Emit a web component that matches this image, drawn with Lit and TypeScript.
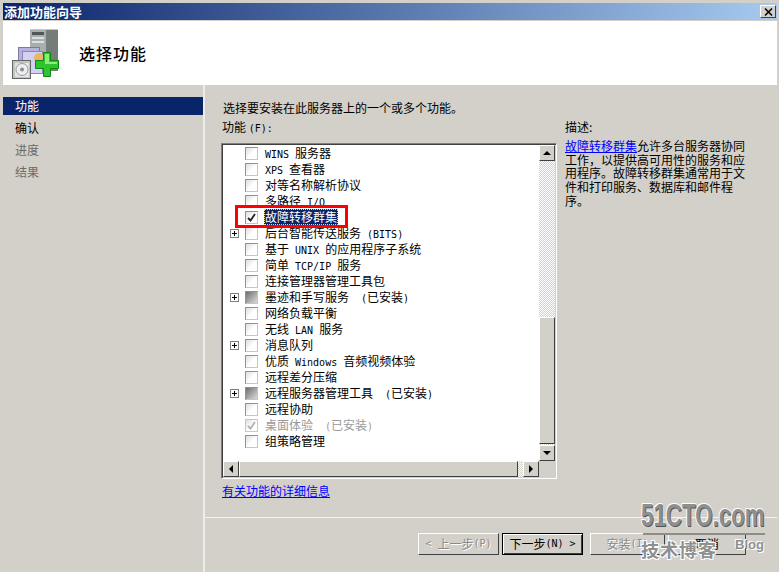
import { LitElement, html, css, svg } from "lit";
import { customElement } from "lit/decorators.js";

type Item = { t: string; exp?: boolean; st?: "checked" | "mixed" | "dis"; sel?: boolean };

const ITEMS: Item[] = [
  { t: "WINS 服务器" },
  { t: "XPS 查看器" },
  { t: "对等名称解析协议" },
  { t: "多路径 I/O" },
  { t: "故障转移群集", st: "checked", sel: true },
  { t: "后台智能传送服务 (BITS)", exp: true },
  { t: "基于 UNIX 的应用程序子系统" },
  { t: "简单 TCP/IP 服务" },
  { t: "连接管理器管理工具包" },
  { t: "墨迹和手写服务  (已安装)", exp: true, st: "mixed" },
  { t: "网络负载平衡" },
  { t: "无线 LAN 服务" },
  { t: "消息队列", exp: true },
  { t: "优质 Windows 音频视频体验" },
  { t: "远程差分压缩" },
  { t: "远程服务器管理工具  (已安装)", exp: true, st: "mixed" },
  { t: "远程协助" },
  { t: "桌面体验  (已安装)", st: "dis" },
  { t: "组策略管理" },
];

function txt(s: string) {
  return s.split(/([\x20-\x7e]+)/).map((p, i) => (i % 2 ? html`<span class="lat">${p}</span>` : p));
}

const arrow = (pts: string) =>
  html`<svg width="8" height="8" viewBox="0 0 8 8"><polygon points=${pts} fill="#000"></polygon></svg>`;

const icon = svg`
  <rect x="18" y="1" width="28" height="42" fill="#7f8784"/>
  <rect x="18" y="1" width="16" height="42" fill="#a8adaf"/>
  <rect x="34" y="1" width="12" height="42" fill="#757d79"/>
  <rect x="18" y="1" width="28" height="1" fill="#c6c9c9"/>
  <rect x="20" y="4" width="12" height="3" fill="#50555a"/>
  <rect x="20" y="9" width="12" height="2" fill="#dcdfdf"/>
  <rect x="20" y="13" width="12" height="2" fill="#dcdfdf"/>
  <rect x="6.500" y="19.500" width="21" height="24" fill="#b4b1dc" stroke="#7c78a8"/>
  <rect x="10.500" y="23.500" width="20" height="22" fill="#d3d1f2" stroke="#8a86b5"/>
  <circle cx="27" cy="30" r="5" fill="#e8b765"/>
  <rect x="0.500" y="32.500" width="18" height="18" fill="#c2c3c2" stroke="#666"/>
  <rect x="3" y="35" width="14" height="14" fill="#e4e5e6"/>
  <circle cx="10" cy="41.500" r="6" fill="#eceeef" stroke="#9a9a9a"/>
  <circle cx="10" cy="41.500" r="2" fill="#8b8b8b"/>
  <path d="M31.500 24.500h7v8h8v8h-8v8h-7v-8h-8v-8h8z" fill="#2fc42f" stroke="#0c8a10"/>
  <path d="M33 26h4v8h8v2h-12z" fill="#8cec7a"/>
`;

@customElement("app-root")
export class AppRoot extends LitElement {
  static styles = css`
    :host {
      display: block;
      position: relative;
      width: 779px;
      height: 572px;
      overflow: hidden;
      background: #d3d0ca;
      font: 12px/14px "Noto Sans CJK SC", sans-serif;
      color: #000;
    }
    .lat { font-family: "DejaVu Sans Mono", monospace; font-size: 10px; white-space: pre; }
    .frame { height: 100%; box-sizing: border-box; padding: 3px 2px 0 3px; display: flex; flex-direction: column; }
    .title {
      height: 17px; flex: none; display: flex; align-items: center; justify-content: space-between;
      padding: 0 1px; background: linear-gradient(90deg, #0a246a, #a6caf0);
      color: #fff; font-size: 13px; font-weight: 700; margin-bottom: 1px;
    }
    .close {
      width: 16px; height: 13px; box-sizing: border-box; background: #d3d0ca; display: flex;
      align-items: center; justify-content: center; border: 1px solid; border-color: #fff #404040 #404040 #fff;
    }
    .head { height: 64px; flex: none; background: #fff; display: flex; align-items: flex-start; }
    .head svg { margin: 7px 0 0 9px; flex: none; }
    .head h1 { margin: 22px 0 0 15px; font-size: 16px; line-height: 20px; font-weight: 500; letter-spacing: 1px; }
    .body { flex: 1; display: flex; min-height: 0; }
    .nav { width: 200px; flex: none; padding-top: 12px; box-sizing: border-box; }
    .nav div { height: 22px; display: flex; }
    .nav span { flex: 1; height: 18px; line-height: 18px; padding-left: 12px; }
    .nav .on span { background: #0a246a; color: #fff; }
    .nav .off { color: #6b6b6b; }
    .sep { width: 2px; flex: none; background: #eeece8; }
    .right { flex: 1; display: flex; flex-direction: column; min-width: 0; }
    .main { height: 432px; flex: none; box-sizing: border-box; padding: 16px 0 0 16px; display: flex; gap: 8px; }
    .col { width: 336px; flex: none; }
    .intro { margin: 0 0 5px 2px; }
    .lbl { margin: 0 0 9px 1px; height: 14px; }
    .list {
      width: 336px; height: 336px; box-sizing: border-box; border: 1px solid; border-color: #808080 #fff #fff #808080;
      box-shadow: inset 1px 1px #404040, inset -1px -1px #d3d0ca; padding: 1px;
      display: grid; grid-template-columns: 1fr 16px; grid-template-rows: 1fr 16px; position: relative;
    }
    .rows { background: #fff; overflow: hidden; }
    .row { height: 16px; display: flex; align-items: center; padding-left: 7px; white-space: pre; }
    .row.dis { color: #9a9a9a; }
    .exp {
      width: 9px; height: 9px; box-sizing: border-box; border: 1px solid #808080; flex: none; margin-right: 6px;
      background: linear-gradient(#000, #000) center / 5px 1px no-repeat, linear-gradient(#000, #000) center / 1px 5px no-repeat, #fff;
    }
    .exp.none { border: 0; background: none; }
    .cb {
      width: 13px; height: 13px; box-sizing: border-box; flex: none; margin-right: 6px; border: 1px solid;
      border-color: #909090 #c4c4c4 #c4c4c4 #909090; background: linear-gradient(135deg, #dfdfdf, #fff 55%);
      display: flex; align-items: center; justify-content: center;
    }
    .cb.mixed { background: linear-gradient(135deg, #6e6e6e, #dcdcdc); }
    .cb.dis { border-color: #c8c8c8; }
    .t { padding: 0 1px; height: 16px; line-height: 16px; box-sizing: border-box; }
    .t.sel { background: #0a246a; color: #fff; outline: 1px dotted #e8d890; outline-offset: -1px; }
    .red { position: absolute; left: 13px; top: 61px; width: 113px; height: 23px; box-sizing: border-box; border: 3px solid #f00; }
    .vbar { display: flex; flex-direction: column; }
    .hbar { display: flex; }
    .sb {
      box-sizing: border-box; width: 16px; height: 16px; flex: none; background: #d3d0ca; display: flex;
      align-items: center; justify-content: center; border: 1px solid; border-color: #fff #404040 #404040 #fff;
    }
    .dither { background: conic-gradient(#d3d0ca 25%, #fff 0 50%, #d3d0ca 0 75%, #fff 0) 0 0 / 2px 2px; }
    .vbar .d1 { height: 156px; flex: none; }
    .vbar .d2 { flex: 1; }
    .thumb {
      box-sizing: border-box; background: #d3d0ca; border: 1px solid; border-color: #fff #404040 #404040 #fff;
    }
    .vbar .thumb { height: 127px; flex: none; }
    .hbar .thumb { flex: 1; }
    .hbar .d2 { width: 5px; flex: none; }
    .corner { background: #d3d0ca; }
    a { color: #00f; text-decoration: underline; }
    .more { display: block; margin: 5px 0 0 1px; }
    .desc { width: 181px; padding-top: 19px; }
    .desc p { margin: 0; line-height: 13.7px; }
    .desc .h { margin-bottom: 5px; line-height: 14px; }
    .foot { flex: 1; border-top: 1px solid #f4f3f0; display: flex; padding: 15px 0 0 213px; box-sizing: border-box; }
    .btn {
      box-sizing: border-box; height: 22px; width: 81px; display: flex; align-items: center; justify-content: center;
      background: #d3d0ca; border: 1px solid; border-color: #fff #404040 #404040 #fff; white-space: pre; flex: none;
    }
    .btn.off { color: #8a8a8a; text-shadow: 1px 1px #fff; }
    .btn.def { border-color: #000; box-shadow: inset 1px 1px #fff, inset -1px -1px #404040; margin: 0 7px 0 3px; }
    .btn.install { width: 75px; margin-right: 3px; }
    .btn.cancel { width: 78px; }
    .wm { position: absolute; left: 640px; top: 503px; width: 128px; height: 60px; color: #8f8f8f; font-weight: 700; pointer-events: none; }
    .wm .a {
      position: absolute; left: 1px; top: -4px; font: 700 31px/34px "Liberation Sans", sans-serif; transform: scaleX(.72);
      transform-origin: 0 0; white-space: nowrap; text-shadow: 1px 1px #555, -1px -1px #fff, 1px -1px #eee, -1px 1px #eee;
    }
    .wm .l { position: absolute; left: 3px; top: 30px; width: 122px; height: 2px; background: #8c8c8c; }
    .wm .b {
      position: absolute; left: 1px; top: 35px; font: 700 18px/22px "Noto Sans CJK SC", sans-serif; letter-spacing: 1px;
      text-shadow: 1px 1px #fff, -1px -1px #fff, 1px -1px #fff, -1px 1px #fff;
    }
    .wm .c {
      position: absolute; left: 95px; top: 34px; font: 700 13px/16px "Liberation Sans", sans-serif;
      text-shadow: 1px 1px #fff, -1px -1px #fff;
    }
  `;

  private check(color: string) {
    return html`<svg width="9" height="9" viewBox="0 0 9 9"><path d="M1 5 L3.500 7.500 L8 1" fill="none" stroke=${color} stroke-width="1.800"></path></svg>`;
  }

  private row(i: Item) {
    return html`<div class="row ${i.st === "dis" ? "dis" : ""}">
      <span class="exp ${i.exp ? "" : "none"}"></span>
      <span class="cb ${i.st ?? ""}">
        ${i.st === "checked" ? this.check("#222") : i.st === "dis" ? this.check("#b0b0b0") : ""}
      </span>
      <span class="t ${i.sel ? "sel" : ""}">${txt(i.t)}</span>
    </div>`;
  }

  render() {
    return html`
      <div class="frame">
        <div class="title">
          <span>添加功能向导</span>
          <span class="close">
            <svg width="9" height="8" viewBox="0 0 9 8"><path d="M1 0.500L8 7.500M8 0.500L1 7.500" stroke="#000" stroke-width="1.500" fill="none"></path></svg>
          </span>
        </div>
        <div class="head">
          <svg width="52" height="52" viewBox="0 0 52 52">${icon}</svg>
          <h1>选择功能</h1>
        </div>
        <div class="body">
          <div class="nav">
            <div class="on"><span>功能</span></div>
            <div><span>确认</span></div>
            <div class="off"><span>进度</span></div>
            <div class="off"><span>结果</span></div>
          </div>
          <div class="sep"></div>
          <div class="right">
            <div class="main">
              <div class="col">
                <div class="intro">选择要安装在此服务器上的一个或多个功能。</div>
                <div class="lbl">功能 ${txt("(F):")}</div>
                <div class="list">
                  <div class="rows">${ITEMS.map((i) => this.row(i))}</div>
                  <div class="vbar">
                    <div class="sb">${arrow("4,2 0,6 8,6")}</div>
                    <div class="dither d1"></div>
                    <div class="thumb"></div>
                    <div class="dither d2"></div>
                    <div class="sb">${arrow("0,2 8,2 4,6")}</div>
                  </div>
                  <div class="hbar">
                    <div class="sb">${arrow("2,4 6,0 6,8")}</div>
                    <div class="thumb"></div>
                    <div class="dither d2"></div>
                    <div class="sb">${arrow("2,0 6,4 2,8")}</div>
                  </div>
                  <div class="corner"></div>
                  <div class="red"></div>
                </div>
                <a class="more" href="#">有关功能的详细信息</a>
              </div>
              <div class="desc">
                <p class="h">描述:</p>
                <p><a href="#">故障转移群集</a>允许多台服务器协同工作，以提供高可用性的服务和应用程序。故障转移群集通常用于文件和打印服务、数据库和邮件程序。</p>
              </div>
            </div>
            <div class="foot">
              <div class="btn off">${txt("< ")}上一步${txt("(P)")}</div>
              <div class="btn def">下一步${txt("(N) >")}</div>
              <div class="btn off install">安装${txt("(I)")}</div>
              <div class="btn cancel">取消</div>
            </div>
          </div>
        </div>
      </div>
      <div class="wm">
        <div class="a">51CTO.com</div>
        <div class="l"></div>
        <div class="b">技术博客</div>
        <div class="c">Blog</div>
      </div>
    `;
  }
}
